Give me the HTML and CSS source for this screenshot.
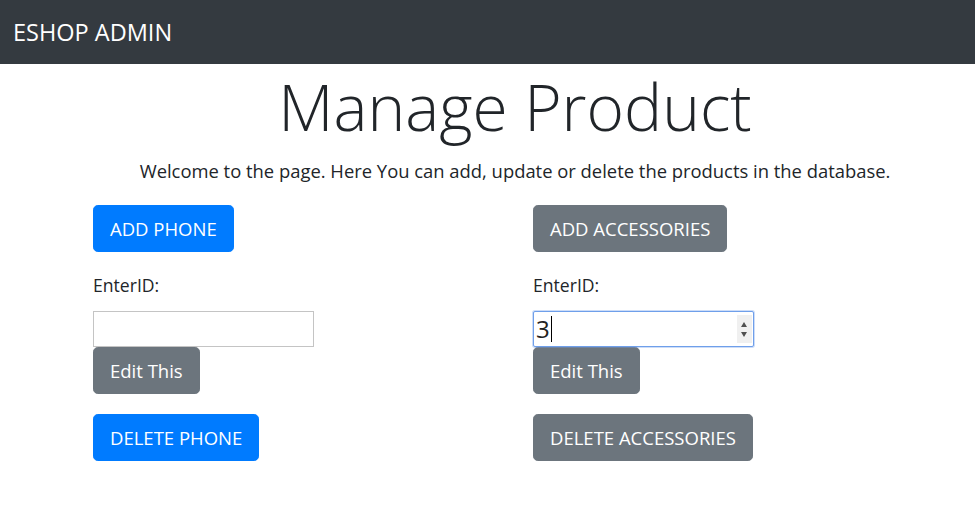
FILE: index.html
```html
<!DOCTYPE html>
<html lang="en">
<head>
<meta charset="utf-8">
<title>Manage Product</title>
<link rel="stylesheet" href="styles.css">
</head>
<body>
<header class="navbar">
  <span class="brand">ESHOP ADMIN</span>
</header>
<main class="page">
  <h1 class="title">Manage Product</h1>
  <p class="lead">Welcome to the page. Here You can add, update or delete the products in the database.</p>
  <div class="cols">
    <section class="col">
      <button class="btn btn-primary">ADD PHONE</button>
      <label class="label">EnterID:</label>
      <div class="field"></div>
      <button class="btn btn-secondary">Edit This</button>
      <button class="btn btn-primary btn-del">DELETE PHONE</button>
    </section>
    <section class="col">
      <button class="btn btn-secondary">ADD ACCESSORIES</button>
      <label class="label">EnterID:</label>
      <div class="field field-focus"><span class="value">3</span><span class="caret"></span>
        <span class="spin"><span class="up"></span><span class="down"></span></span>
      </div>
      <button class="btn btn-secondary">Edit This</button>
      <button class="btn btn-secondary btn-del">DELETE ACCESSORIES</button>
    </section>
  </div>
</main>
</body>
</html>
```
FILE: styles.css
```css
* { box-sizing: border-box; }
body {
  margin: 0;
  font-family: "Open Sans", "Noto Sans", sans-serif;
  color: #212529;
  background: #fff;
}
.navbar {
  height: 64px;
  background: #343a40;
  display: flex;
  align-items: center;
  padding-left: 13px;
}
.brand {
  color: #fff;
  font-size: 23.5px;
  line-height: 30px;
}
.page {
  padding-left: 55px;
}
.title {
  margin: 4px 0 0;
  text-align: center;
  font-size: 64px;
  font-weight: 300;
  line-height: 78px;
}
.lead {
  margin: 13px 0 0;
  text-align: center;
  font-size: 18.4px;
  line-height: 24px;
}
.cols {
  display: grid;
  grid-template-columns: 440px 1fr;
  padding-left: 38px;
  margin-top: 22px;
}
.col {
  display: flex;
  flex-direction: column;
  align-items: flex-start;
}
.btn {
  font-family: inherit;
  font-size: 18.5px;
  line-height: 29px;
  padding: 8px 16px;
  border: 1px solid transparent;
  border-radius: 4.8px;
  color: #fff;
  cursor: pointer;
}
.btn-primary { background: #007bff; border-color: #007bff; }
.btn-secondary { background: #6c757d; border-color: #6c757d; }
.btn-del { margin-top: 20px; }
.label {
  margin-top: 21px;
  font-size: 17.6px;
  line-height: 25px;
}
.field {
  position: relative;
  margin-top: 13px;
  width: 221px;
  height: 36px;
  border: 1px solid #c4c4c4;
  background: #fff;
  display: flex;
  align-items: center;
  padding-left: 2px;
}
.field-focus {
  border-color: #6f9fea;
  border-radius: 2px;
  box-shadow: 0 0 0 1px rgba(111, 159, 234, 0.35);
}
.value {
  font-size: 24px;
  line-height: 30px;
  color: #222;
}
.caret {
  width: 1px;
  height: 26px;
  background: #000;
  margin-left: 1px;
}
.spin {
  position: absolute;
  right: 1px;
  top: 3px;
  width: 15px;
  height: 28px;
  background: #f0f0f0;
}
.up, .down {
  position: absolute;
  left: 4px;
  width: 0;
  height: 0;
  border-left: 3.5px solid transparent;
  border-right: 3.5px solid transparent;
}
.up { top: 7px; border-bottom: 5px solid #505050; }
.down { top: 17px; border-top: 5px solid #505050; }
```
